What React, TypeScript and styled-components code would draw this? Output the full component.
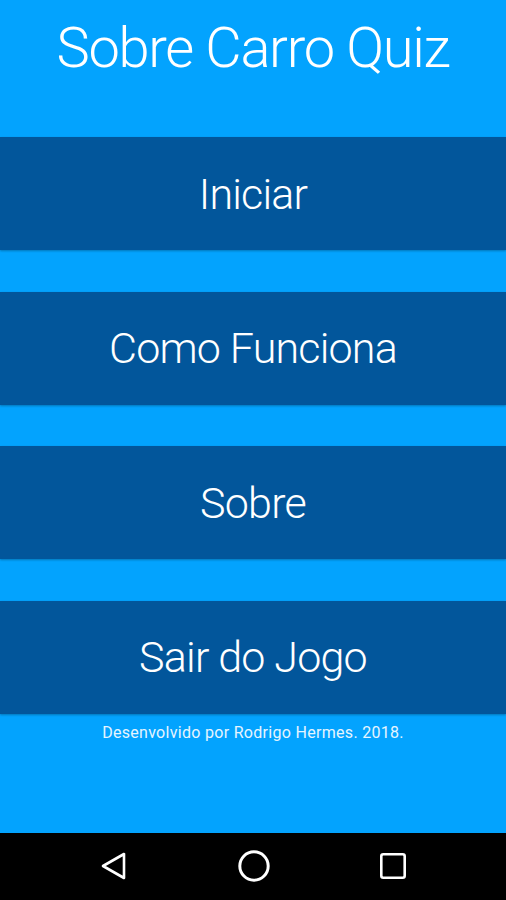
import styled, { createGlobalStyle } from "styled-components";

const GlobalStyle = createGlobalStyle`
  html, body {
    margin: 0;
    padding: 0;
    background: #03a3fe;
  }
  * { box-sizing: border-box; }
`;

const menuItems = ["Iniciar", "Como Funciona", "Sobre", "Sair do Jogo"];

const App = () => {
  return (
    <Screen>
      <GlobalStyle />
      <Header>
        <Title>Sobre Carro Quiz</Title>
      </Header>
      <Menu>
        {menuItems.map((label) => (
          <MenuButton key={label}>{label}</MenuButton>
        ))}
      </Menu>
      <Credits>Desenvolvido por Rodrigo Hermes. 2018.</Credits>
      <NavBar>
        <NavKey aria-label="voltar">
          <svg width="28" height="28" viewBox="0 0 28 28">
            <path d="M24 2 L24 26 L3 14 Z" fill="none" stroke="#fff" strokeWidth="2.6" strokeLinejoin="round" />
          </svg>
        </NavKey>
        <NavKey aria-label="inicio">
          <svg width="34" height="34" viewBox="0 0 34 34">
            <circle cx="17" cy="17" r="14.2" fill="none" stroke="#fff" strokeWidth="3" />
          </svg>
        </NavKey>
        <NavKey aria-label="recentes">
          <svg width="28" height="28" viewBox="0 0 28 28">
            <rect x="2.3" y="2.3" width="23.4" height="23.4" rx="2" fill="none" stroke="#fff" strokeWidth="2.6" />
          </svg>
        </NavKey>
      </NavBar>
    </Screen>
  );
};

const Screen = styled.div`
  display: flex;
  flex-direction: column;
  height: 100vh;
  background: #03a3fe;
  font-family: Roboto, "Open Sans", sans-serif;
  color: #ffffff;
`;

const Header = styled.header`
  height: 137px;
  padding-top: 8px;
  display: flex;
  justify-content: center;
`;

const Title = styled.h1`
  margin: 0;
  font-size: 56px;
  font-weight: 300;
  line-height: 80px;
  letter-spacing: -1.3px;
  white-space: nowrap;
`;

const Menu = styled.nav`
  display: flex;
  flex-direction: column;
  gap: 41.5px;
`;

const MenuButton = styled.button`
  height: 113px;
  width: 100%;
  border: none;
  background: #02569b;
  box-shadow: 0 1px 2px rgba(0, 0, 0, 0.28);
  color: #ffffff;
  font-family: inherit;
  font-size: 43px;
  font-weight: 300;
  letter-spacing: -0.8px;
  cursor: pointer;
`;

const Credits = styled.p`
  margin: 0;
  padding-top: 10px;
  text-align: center;
  font-size: 16px;
  line-height: 18px;
  letter-spacing: 0.3px;
  color: #e6f5ff;
  flex: 1;
`;

const NavBar = styled.div`
  height: 67px;
  background: #000000;
  display: flex;
  align-items: center;
  justify-content: space-between;
  padding: 0 85px 2px 86px;
`;

const NavKey = styled.div`
  width: 56px;
  display: flex;
  justify-content: center;
  align-items: center;
`;

export default App;
